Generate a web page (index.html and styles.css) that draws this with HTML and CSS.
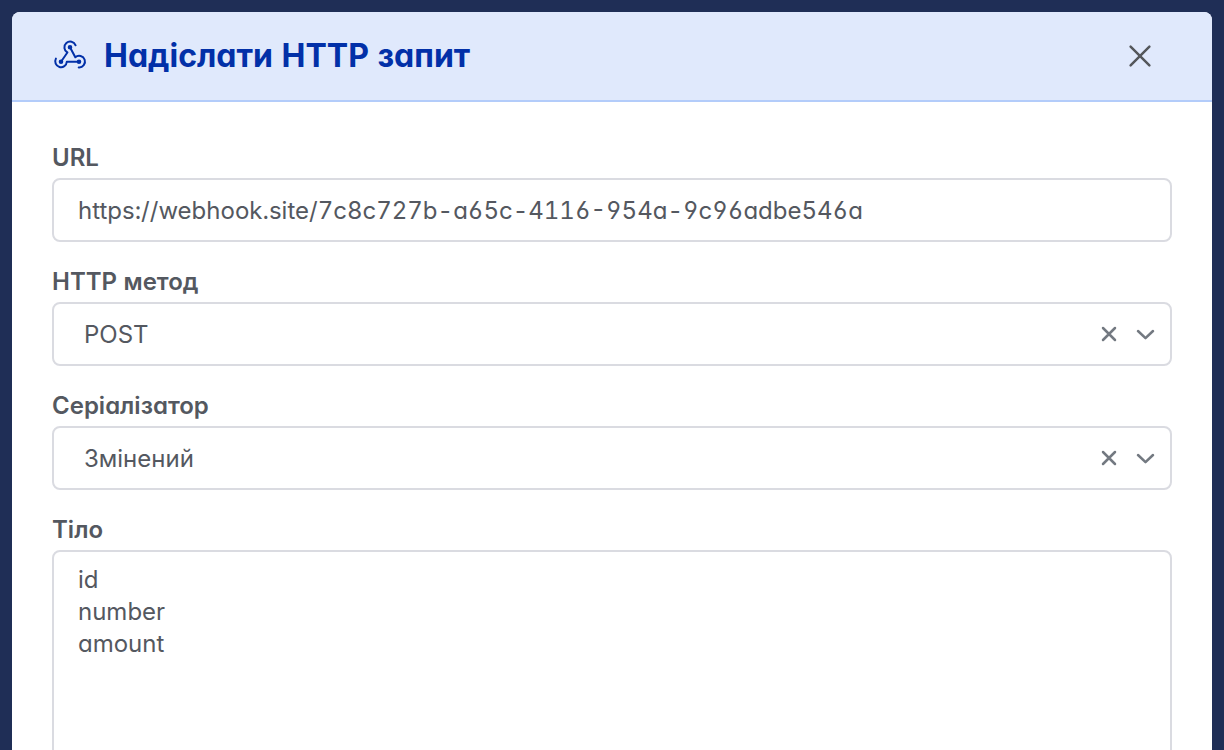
FILE: index.html
```html
<!DOCTYPE html>
<html lang="uk">
<head>
  <meta charset="UTF-8">
  <meta name="viewport" content="width=device-width, initial-scale=1.0">
  <title>Надіслати HTTP запит</title>
  <link rel="stylesheet" href="styles.css">
</head>
<body>
<div class="backdrop">
  <form class="modal">
    <div class="modal-header">
      <svg class="modal-icon" viewBox="0 0 36 36" aria-hidden="true">
        <path d="M23.6 7.3A5.8 5.8 0 1 0 15.4 14.5L9 23.7"/>
        <path d="M18 9.3L23.3 19.3A5.8 5.8 0 1 1 26.7 29.4"/>
        <path d="M3.9 20.6A5.8 5.8 0 1 0 14.8 23.7H27"/>
        <circle class="dot" cx="18" cy="9.3" r="1.3"/>
        <circle class="dot" cx="9" cy="23.7" r="1.3"/>
        <circle class="dot" cx="27" cy="23.7" r="1.3"/>
      </svg>
      <h1 class="modal-title">Надіслати HTTP запит</h1>
      <button type="button" class="close" aria-label="Закрити">
        <svg viewBox="0 0 24 24"><path d="M2.6 2.6l18.8 18.8M21.4 2.6l-18.8 18.8"/></svg>
      </button>
    </div>
    <div class="modal-body">
      <div class="field">
        <label for="url">URL</label>
        <input class="control" type="text" id="url" spellcheck="false" value="https://webhook.site/7c8c727b-a65c-4116-954a-9c96adbe546a">
      </div>
      <div class="field">
        <label for="method">HTTP метод</label>
        <div class="select">
          <select class="control" id="method">
            <option>POST</option>
          </select>
          <div class="select-icons">
            <button type="button" class="clear" aria-label="Очистити">
              <svg viewBox="0 0 18 18"><path d="M3 3l12 12M15 3l-12 12"/></svg>
            </button>
            <svg class="arrow" viewBox="0 0 20 18"><path d="M2 6l7.5 7.2l7.5 -7.2"/></svg>
          </div>
        </div>
      </div>
      <div class="field">
        <label for="serializer">Серіалізатор</label>
        <div class="select">
          <select class="control" id="serializer">
            <option>Змінений</option>
          </select>
          <div class="select-icons">
            <button type="button" class="clear" aria-label="Очистити">
              <svg viewBox="0 0 18 18"><path d="M3 3l12 12M15 3l-12 12"/></svg>
            </button>
            <svg class="arrow" viewBox="0 0 20 18"><path d="M2 6l7.5 7.2l7.5 -7.2"/></svg>
          </div>
        </div>
      </div>
      <div class="field">
        <label for="body">Тіло</label>
        <textarea class="control" id="body" rows="8" spellcheck="false">id
number
amount</textarea>
      </div>
    </div>
  </form>
</div>
</body>
</html>
```

FILE: styles.css
```css
*{
  box-sizing: border-box;
  margin: 0;
  padding: 0;
}
body{
  font-family: Inter, "Liberation Sans", sans-serif;
  font-size: 24px;
  line-height: 32px;
  font-feature-settings: "cv03", "cv04", "cv11", "tnum";
  color: #545860;
}
.backdrop{
  height: 100vh;
  padding: 12px;
  overflow: hidden;
  background-color: #1f2e56;
}
.modal{
  border-radius: 8px;
  background-color: #fff;
  overflow: hidden;
}
.modal-header{
  display: flex;
  align-items: center;
  height: 90px;
  padding: 0 56px 0 40px;
  border-bottom: 2px solid #b3ccfa;
  background-color: #e0e9fc;
  color: #0230a8;
}
svg{
  display: block;
  fill: none;
  stroke: currentColor;
  stroke-linecap: round;
  stroke-linejoin: round;
}
.modal-icon{
  width: 36px;
  height: 36px;
  margin-right: 16px;
  stroke-width: 2;
}
.dot{
  fill: currentColor;
}
.modal-title{
  font-size: 32px;
  line-height: 40px;
  font-weight: 700;
}
.close, .clear{
  border: 0;
  background: none;
  cursor: pointer;
}
.close{
  margin-left: auto;
  padding: 4px;
  color: #55585c;
}
.close svg{
  width: 24px;
  height: 24px;
  stroke-width: 2.5;
}
.modal-body{
  padding: 40px;
}
.field{
  margin-bottom: 24px;
}
label{
  display: block;
  margin-bottom: 4px;
  font-weight: 600;
}
.control{
  display: block;
  width: 100%;
  height: 64px;
  padding: 12px 24px;
  border: 2px solid #dadbe1;
  border-radius: 8px;
  outline: none;
  background-color: #fff;
  color: inherit;
  font: inherit;
  font-feature-settings: inherit;
}
textarea.control{
  height: auto;
  resize: none;
}
.select{
  position: relative;
}
.select .control{
  appearance: none;
  padding: 2px 90px 0 30px;
}
/* clear and arrow lie over the select */
.select-icons{
  position: absolute;
  top: 0;
  right: 16px;
  display: flex;
  align-items: center;
  gap: 18px;
  height: 100%;
  color: #737981;
  pointer-events: none;
}
.clear{
  color: inherit;
  pointer-events: auto;
}
.clear svg{
  width: 18px;
  height: 18px;
  stroke-width: 2.5;
}
.arrow{
  width: 20px;
  height: 18px;
  stroke-width: 2.5;
}
```
